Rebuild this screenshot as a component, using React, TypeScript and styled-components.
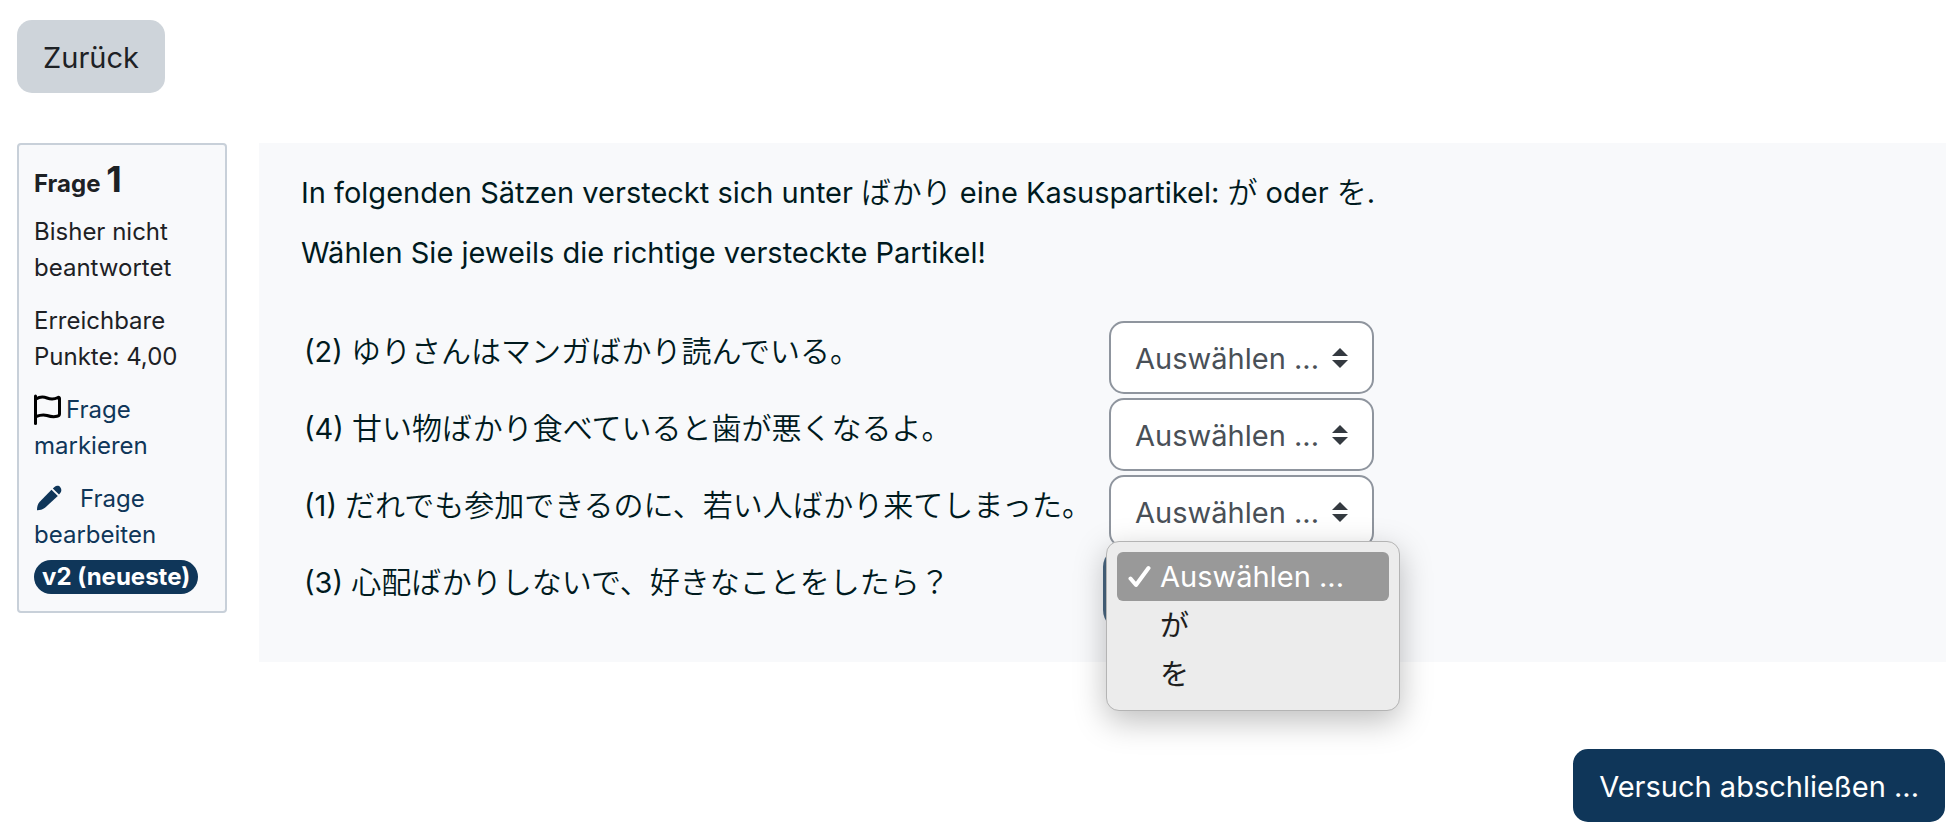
import React from "react";
import styled, { createGlobalStyle } from "styled-components";

const GlobalStyle = createGlobalStyle`
  *, *::before, *::after { box-sizing: border-box; }
  body {
    margin: 0;
    background: #fff;
    color: #1d2125;
    font-family: Inter, "Noto Sans CJK JP", sans-serif;
    font-size: 29px;
    line-height: 45px;
  }
`;

const Page = styled.main`
  padding: 20px 1px 18px 17px;
`;

const Button = styled.button<{ $primary?: boolean }>`
  display: block;
  height: 73px;
  padding: 2px 26px 0;
  border: 0;
  border-radius: 15px;
  background: ${(p) => (p.$primary ? "#0f3659" : "#ced4da")};
  color: ${(p) => (p.$primary ? "#fff" : "#1d2125")};
  font: inherit;
  cursor: pointer;
`;

const Question = styled.section`
  display: flex;
  align-items: flex-start;
  gap: 32px;
  margin: 50px -1px 87px 0;
`;

const Info = styled.aside`
  flex: 0 0 210px;
  padding: 16px 15px 17px;
  border: 2px solid #c8d0d9;
  border-radius: 4px;
  background: #f8f9fb;
  font-size: 24px;
  line-height: 36px;
`;

const Heading = styled.h3`
  margin: 0 0 9px;
  font-size: 24px;
  line-height: 42px;
  font-weight: 700;
`;

const Number = styled.span`
  font-size: 36px;
  line-height: 36px;
`;

const InfoText = styled.div`
  margin-bottom: 17px;
`;

const InfoLink = styled.a`
  color: #0f3659;
  text-decoration: none;
`;

const FlagIcon = styled.svg`
  width: 28px;
  height: 32px;
  margin-right: 4px;
  vertical-align: -8px;
`;

const PencilIcon = styled.svg`
  width: 30px;
  height: 26px;
  margin-right: 16px;
  vertical-align: -4px;
`;

const Badge = styled.span`
  display: block;
  width: fit-content;
  margin-top: 7px;
  padding: 0 8px;
  border-radius: 17px;
  background: #0f3659;
  color: #fff;
  line-height: 34px;
  font-weight: 700;
`;

const Content = styled.div`
  flex: 1;
  min-width: 0;
  padding: 25px 42px 35px;
  background: #f8f9fb;
  color: #001a1e;
`;

const Paragraph = styled.p`
  margin: 0 0 15px;
`;

const Japanese = styled.span.attrs({ lang: "ja" })`
  font-family: "Noto Sans CJK JP", sans-serif;
  font-size: 30px;
  font-weight: 350;
`;

const Answers = styled.table`
  margin-top: 44px;
  border-collapse: collapse;
`;

const Sentence = styled.td`
  padding: 8px 17px 2px 3px;
  vertical-align: top;
`;

const Choice = styled.td`
  padding: 2px 0;
`;

const SelectBox = styled.div`
  position: relative;
  width: 265px;
`;

const Select = styled.select<{ $open: boolean }>`
  display: block;
  appearance: none;
  width: 100%;
  height: 73px;
  padding: 2px 50px 0 24px;
  border: 2px solid #8f959e;
  border-radius: 15px;
  outline: 0;
  background: #fff;
  color: #495057;
  font: inherit;
  box-shadow: ${(p) => (p.$open ? "0 0 0 6px rgba(15, 54, 89, 0.75)" : "none")};
`;

const Arrows = styled.svg`
  position: absolute;
  top: 27px;
  right: 26px;
  width: 16px;
  height: 20px;
  pointer-events: none;
`;

const Menu = styled.ul`
  position: absolute;
  z-index: 1;
  top: -11px;
  left: -3px;
  width: 294px;
  margin: 0;
  padding: 10px 10px 11px;
  list-style: none;
  border: 1px solid #b4b4b4;
  border-radius: 13px;
  background: #ececec;
  color: #1e1e1e;
  box-shadow: 0 10px 32px rgba(0, 0, 0, 0.26);
`;

const Option = styled.li<{ $active?: boolean }>`
  display: grid;
  grid-template-columns: 32px 1fr;
  align-items: center;
  height: 49px;
  padding-left: 11px;
  border-radius: 6px;
  background: ${(p) => (p.$active ? "#999" : "transparent")};
  color: ${(p) => (p.$active ? "#fff" : "inherit")};
`;

const OptionText = styled.span`
  grid-column: 2;
`;

const Footer = styled.div`
  display: flex;
  justify-content: flex-end;
`;

const placeholder = "Auswählen ...";
const choices = ["が", "を"];

const sentences = [
  { n: 2, text: "ゆりさんはマンガばかり読んでいる。" },
  { n: 4, text: "甘い物ばかり食べていると歯が悪くなるよ。" },
  { n: 1, text: "だれでも参加できるのに、若い人ばかり来てしまった。" },
  { n: 3, text: "心配ばかりしないで、好きなことをしたら？" },
];

function ParticleMenu() {
  return (
    <Menu role="listbox" aria-label="Partikel">
      <Option role="option" aria-selected="true" $active>
        <svg width="24" height="24" viewBox="0 0 24 24" fill="none" aria-hidden="true">
          <path d="M2.5 13.5L8 20L20.5 3" stroke="#fff" strokeWidth="4" strokeLinecap="round" strokeLinejoin="round" />
        </svg>
        <OptionText>{placeholder}</OptionText>
      </Option>
      {choices.map((c) => (
        <Option key={c} role="option" aria-selected="false">
          <OptionText lang="ja">{c}</OptionText>
        </Option>
      ))}
    </Menu>
  );
}

export default function App() {
  return (
    <>
      <GlobalStyle />
      <Page>
        <Button type="button">Zurück</Button>
        <Question>
          <Info>
            <Heading>
              Frage <Number>1</Number>
            </Heading>
            <InfoText>Bisher nicht beantwortet</InfoText>
            <InfoText>Erreichbare Punkte: 4,00</InfoText>
            <InfoText>
              <InfoLink href="#flag">
                <FlagIcon viewBox="0 0 28 32" fill="none" stroke="#000" strokeWidth="3" strokeLinecap="round" aria-hidden="true">
                  <path d="M1.5 2V29.500" />
                  <path d="M2 5C6 2.500 9 2.500 13 4C17 5.500 21 5 24 3.500Q25.500 3 25.500 4.500V20C25.500 21.500 24.500 22 23 22.300C19 23.300 16 22.500 13 21.500C9 20.300 6 21 2 22.500" strokeLinejoin="round" />
                </FlagIcon>
                Frage markieren
              </InfoLink>
            </InfoText>
            <InfoLink href="#edit">
              <PencilIcon viewBox="0 0 30 26" fill="#0f3659" aria-hidden="true">
                <path d="M17.500 4.800L23.800 11L11 22.800C8.500 24.700 5.500 25.300 3 25.200C3 22.300 3.500 19.300 5.500 17Z" />
                <path d="M18.800 3.500L20.500 2C22.500 0.300 25 0.600 26.300 2.200C27.800 4 27.600 6.300 26.300 8L25 9.600Z" />
              </PencilIcon>
              Frage bearbeiten
            </InfoLink>
            <Badge>v2 (neueste)</Badge>
          </Info>
          <Content>
            <Paragraph>
              In folgenden Sätzen versteckt sich unter <Japanese>ばかり</Japanese> eine Kasuspartikel:{" "}
              <Japanese>が</Japanese> oder <Japanese>を</Japanese>.
            </Paragraph>
            <Paragraph>Wählen Sie jeweils die richtige versteckte Partikel!</Paragraph>
            <Answers>
              <tbody>
                {sentences.map((s) => (
                  <tr key={s.n}>
                    <Sentence>
                      <label htmlFor={`answer-${s.n}`}>
                        ({s.n}) <Japanese>{s.text}</Japanese>
                      </label>
                    </Sentence>
                    <Choice>
                      <SelectBox>
                        <Select id={`answer-${s.n}`} defaultValue="" $open={s.n === 3}>
                          <option value="">{placeholder}</option>
                          {choices.map((c) => (
                            <option key={c}>{c}</option>
                          ))}
                        </Select>
                        <Arrows viewBox="0 0 16 20" fill="#343a40" aria-hidden="true">
                          <path d="M0 8L8 0L16 8Z" />
                          <path d="M0 12H16L8 20Z" />
                        </Arrows>
                        {s.n === 3 && <ParticleMenu />}
                      </SelectBox>
                    </Choice>
                  </tr>
                ))}
              </tbody>
            </Answers>
          </Content>
        </Question>
        <Footer>
          <Button type="submit" $primary>
            Versuch abschließen ...
          </Button>
        </Footer>
      </Page>
    </>
  );
}
